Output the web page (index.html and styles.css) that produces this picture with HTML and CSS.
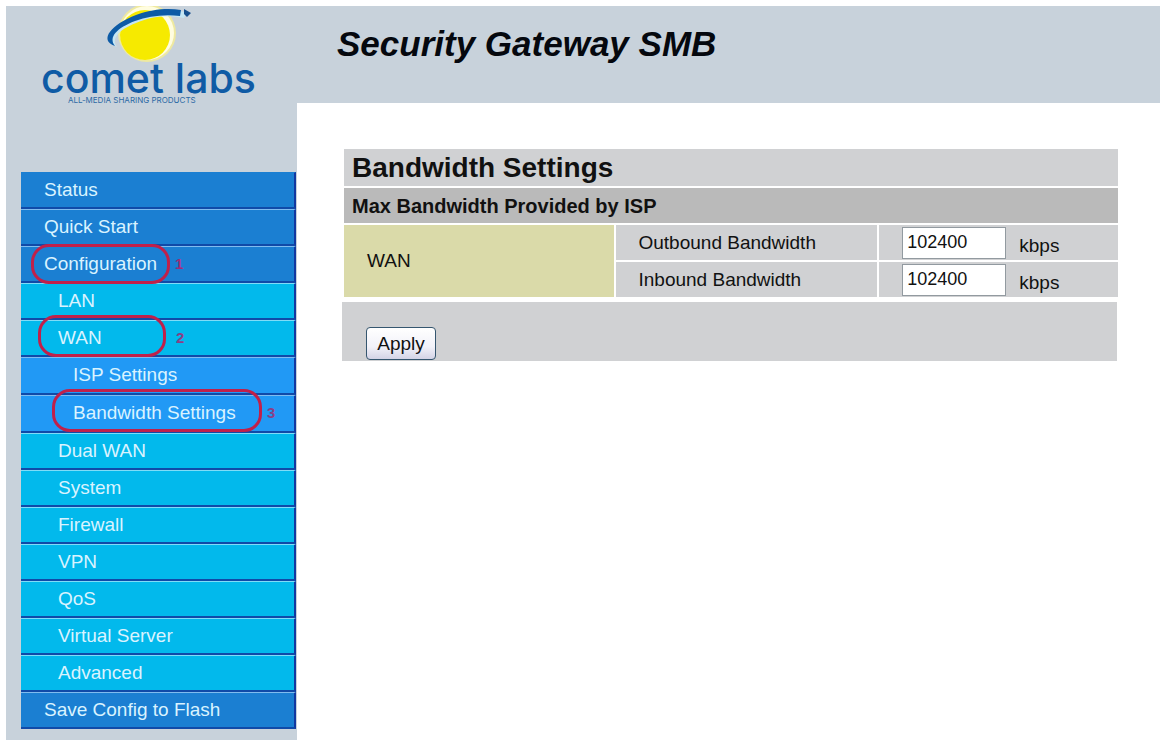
FILE: index.html
```html
<!DOCTYPE html>
<html lang="en">
<head>
<meta charset="utf-8">
<title>Security Gateway SMB</title>
<link rel="stylesheet" href="styles.css">
</head>
<body>
<div class="page">
  <aside class="sidebar">
    <svg class="logo" viewBox="0 0 291 105" role="img" aria-label="comet labs">
      <circle cx="141" cy="27" r="29" fill="#eee9a0"/>
      <circle cx="141" cy="27" r="27" fill="#fffde0"/>
      <circle cx="139" cy="29" r="25" fill="#f6ea00"/>
      <path d="M111 41C96 34 110 19 133 11C149 5 166 4 181 6L178 12C160 8 144 11 130 17C112 24 105 33 111 41Z" fill="#c4e6f4"/>
      <path d="M109 40C92 34 106 18 130 9C146 3 162 2 175 4L174 10C158 8 143 10 129 15C111 22 102 31 109 40Z" fill="#0d5ba6"/>
      <path d="M178 3L185 7L181 11L178 8Z" fill="#164f8d"/>
      <text class="logo-name" x="35" y="87">comet labs</text>
      <text class="logo-tag" x="62" y="97">ALL-MEDIA SHARING PRODUCTS</text>
    </svg>
    <nav class="menu">
      <ul class="list">
        <li class="item"><a class="link" href="#">Status</a></li>
        <li class="item"><a class="link" href="#">Quick Start</a></li>
        <li class="item"><a class="link" href="#">Configuration</a><span class="ring ring-one"></span><span class="step step-one">1</span></li>
        <li class="item"><a class="link sub" href="#">LAN</a></li>
        <li class="item"><a class="link sub" href="#">WAN</a><span class="ring ring-two"></span><span class="step step-two">2</span></li>
        <li class="item"><a class="link deep" href="#">ISP Settings</a></li>
        <li class="item"><a class="link deep" href="#">Bandwidth Settings</a><span class="ring ring-three"></span><span class="step step-three">3</span></li>
        <li class="item"><a class="link sub" href="#">Dual WAN</a></li>
        <li class="item"><a class="link sub" href="#">System</a></li>
        <li class="item"><a class="link sub" href="#">Firewall</a></li>
        <li class="item"><a class="link sub" href="#">VPN</a></li>
        <li class="item"><a class="link sub" href="#">QoS</a></li>
        <li class="item"><a class="link sub" href="#">Virtual Server</a></li>
        <li class="item"><a class="link sub" href="#">Advanced</a></li>
        <li class="item"><a class="link" href="#">Save Config to Flash</a></li>
      </ul>
    </nav>
  </aside>
  <div class="body">
    <header class="header"><h1 class="product">Security Gateway SMB</h1></header>
    <main class="content">
      <form class="form">
        <table class="settings">
          <colgroup><col class="col-name"><col class="col-label"><col></colgroup>
          <tr><th class="title" colspan="3">Bandwidth Settings</th></tr>
          <tr><th class="subtitle" colspan="3">Max Bandwidth Provided by ISP</th></tr>
          <tr>
            <td class="cell group" rowspan="2">WAN</td>
            <td class="cell"><label for="outbound">Outbound Bandwidth</label></td>
            <td class="cell"><div class="field"><input class="input" id="outbound" type="text" value="102400"><span class="unit">kbps</span></div></td>
          </tr>
          <tr>
            <td class="cell"><label for="inbound">Inbound Bandwidth</label></td>
            <td class="cell"><div class="field"><input class="input" id="inbound" type="text" value="102400"><span class="unit">kbps</span></div></td>
          </tr>
        </table>
        <div class="actions"><button class="apply" type="button">Apply</button></div>
      </form>
    </main>
  </div>
</div>
</body>
</html>
```
FILE: styles.css
```css
* { box-sizing: border-box; }

body {
  margin: 0;
  background: #fff;
  color: #111;
  font: 19px/24px "Liberation Sans", Arial, sans-serif;
}

.page {
  display: flex;
  min-height: 100vh;
  padding: 6px 5px 0 6px;
}

/* Sidebar */
.sidebar {
  flex: 0 0 291px;
  background: #c8d2db;
}

.logo { display: block; width: 100%; }

.logo-name {
  fill: #0f5ba5;
  font: 500 41px Inter, sans-serif;
}

.logo-tag {
  fill: #2c6aa5;
  font: 8px Inter, sans-serif;
}

.menu { padding: 61px 1px 0 15px; }

.list {
  margin: 0;
  padding: 0;
  list-style: none;
}

.item { position: relative; }

.link {
  display: block;
  height: 37px;
  padding-left: 23px;
  border-top: 1px solid #7fbcf0;
  border-right: 2px solid #1238a0;
  border-bottom: 2px solid #104aa8;
  background: #1b7fd2;
  color: #d9f3ff;
  line-height: 34px;
  text-decoration: none;
}

.item:first-child .link { border-top-color: #1b7fd2; }

.sub {
  padding-left: 37px;
  border-top-color: #7fdcf8;
  background: #02b9ec;
}

.deep {
  height: 38px;
  padding-left: 52px;
  background: #2199f5;
}

/* Numbered walkthrough marks over the menu */
.ring {
  position: absolute;
  z-index: 1;
  border: 3px solid #c0204a;
  border-radius: 18px;
  pointer-events: none;
}

.ring-one { top: -2px; left: 10px; width: 139px; height: 40px; }
.ring-two { top: -5px; left: 17px; width: 128px; height: 42px; }
.ring-three { top: -6px; left: 31px; width: 210px; height: 43px; }

.step {
  position: absolute;
  top: 6px;
  color: #8a3f86;
  font-size: 15px;
  font-weight: bold;
}

.step-one { left: 154px; color: #a02c78; }
.step-two { left: 155px; }
.step-three { left: 246px; }

/* Main column */
.body { flex: 1; min-width: 0; }

.header {
  padding: 16px 40px 37px;
  background: #c8d2db;
}

.product {
  margin: 0;
  color: #05080e;
  font-size: 35px;
  font-style: italic;
  line-height: 44px;
}

.content { padding: 44px 40px 0 45px; }

.settings {
  width: 100%;
  border-spacing: 2px;
  table-layout: fixed;
}

.col-name { width: 35%; }
.col-label { width: 34%; }

.title,
.subtitle {
  padding: 0 8px;
  background: #d0d1d3;
  text-align: left;
}

.title { height: 37px; font-size: 28px; line-height: 36px; }
.subtitle { height: 35px; background: #bababa; font-size: 20px; }

.cell {
  height: 35px;
  padding: 0 23px;
  background: #d0d1d3;
}

.group { background: #dadaa9; }

.field { display: flex; align-items: center; gap: 13px; }

.input {
  width: 104px;
  height: 32px;
  padding: 0 4px;
  border: 1px solid #929aa0;
  background: #fff;
  color: #111;
  font: 18px "Liberation Sans", Arial, sans-serif;
}

.unit { padding-top: 6px; }

.actions {
  margin: 3px 3px 0 0;
  padding: 25px 24px 1px;
  background: #d0d1d3;
}

.apply {
  display: block;
  width: 70px;
  height: 33px;
  padding: 0;
  border: 1px solid #35566f;
  border-radius: 4px;
  background: linear-gradient(#fff, #f2f2f9 60%, #d3d3e6);
  color: #111;
  font: inherit;
}
```
